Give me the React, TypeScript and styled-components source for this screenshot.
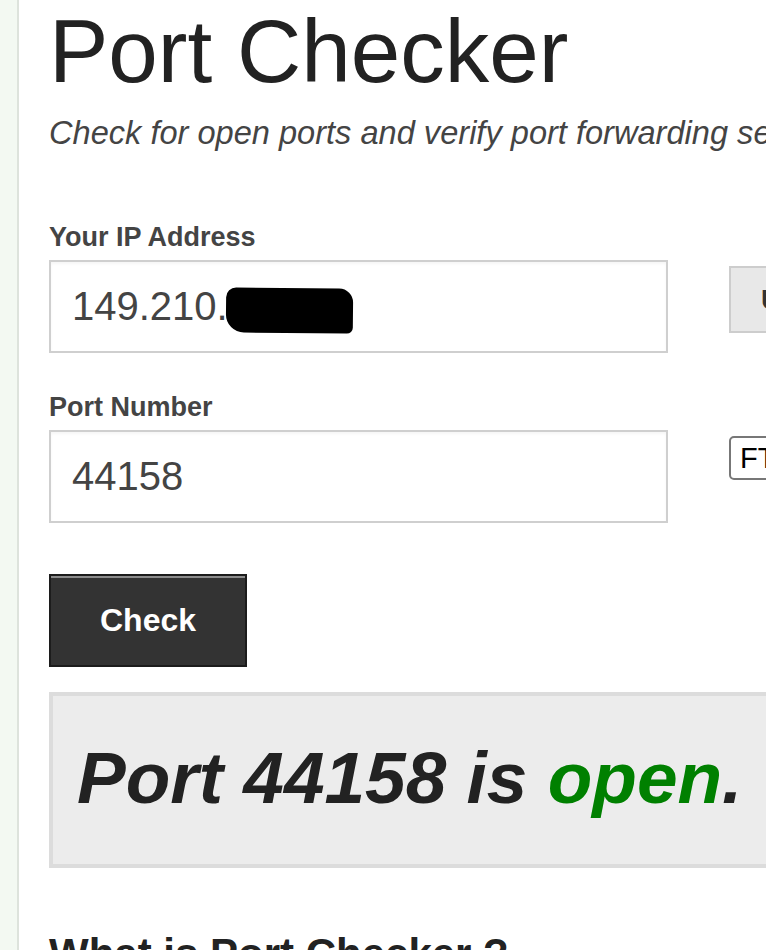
import React from 'react';
import styled, { createGlobalStyle } from 'styled-components';

const GlobalStyle = createGlobalStyle`
  html, body {
    margin: 0;
    padding: 0;
    background: #fff;
    overflow: hidden;
  }
  body {
    font-family: "Liberation Sans", Arial, Helvetica, sans-serif;
    color: #222;
  }
`;

const Page = styled.div`
  display: flex;
  min-height: 950px;
  width: 766px;
  overflow: hidden;
`;

const Sidebar = styled.div`
  flex: 0 0 17px;
  background: #f3f9f2;
  border-right: 2px solid #dde3dc;
`;

const Main = styled.main`
  flex: 1 0 auto;
  padding: 2px 0 0 30px;
  white-space: nowrap;
`;

const Title = styled.h1`
  margin: 0;
  font-size: 89px;
  line-height: 98px;
  font-weight: normal;
  color: #222;
`;

const Subtitle = styled.p`
  margin: 14px 0 0;
  font-size: 32.6px;
  line-height: 38px;
  font-style: italic;
  color: #444;
`;

const Label = styled.label<{ $gap: number }>`
  display: block;
  margin-top: ${(p) => p.$gap}px;
  font-size: 27px;
  line-height: 32px;
  font-weight: bold;
  color: #444;
`;

const FieldRow = styled.div`
  display: flex;
  align-items: flex-start;
  gap: 61px;
  margin-top: 7px;
`;

const Field = styled.div`
  box-sizing: border-box;
  flex: 0 0 619px;
  height: 93px;
  padding: 0 21px;
  display: flex;
  align-items: center;
  border: 2px solid #cfcfcf;
  background: #fff;
  box-shadow: inset 0 2px 3px rgba(0, 0, 0, 0.04);
  font-size: 40px;
  color: #444;
`;

const Redact = styled.span`
  display: inline-block;
  width: 127px;
  height: 45px;
  margin-left: -2px;
  background: #000;
  border-radius: 10px 14px 6px 18px;
  transform: translateY(4px) rotate(0.6deg);
`;

const SideButton = styled.button`
  box-sizing: border-box;
  margin-top: 6px;
  height: 67px;
  padding: 0 30px;
  border: 2px solid #cdcdcd;
  background: #e8e8e8;
  font-family: inherit;
  font-size: 28px;
  font-weight: bold;
  color: #333;
`;

const Select = styled.select`
  box-sizing: border-box;
  margin-top: 6px;
  height: 44px;
  padding: 0 60px 0 9px;
  appearance: none;
  border: 2px solid #777;
  border-radius: 5px;
  background: #fff;
  font-family: inherit;
  font-size: 29px;
  color: #000;
`;

const CheckButton = styled.button`
  box-sizing: border-box;
  display: block;
  margin-top: 51px;
  width: 198px;
  height: 93px;
  border: 2px solid #1c1c1c;
  box-shadow: inset 0 2px 0 #8c8c8c;
  background: #333;
  color: #fff;
  font-family: inherit;
  font-size: 32px;
  font-weight: bold;
`;

const Result = styled.div`
  box-sizing: border-box;
  margin-top: 25px;
  width: 760px;
  height: 176px;
  padding: 37px 24px 0;
  border: 4px solid #dcdcdc;
  background: #ececec;
  font-size: 73px;
  line-height: 89px;
  font-weight: bold;
  font-style: italic;
  color: #222;
`;

const Open = styled.span`
  color: #008000;
`;

const SectionTitle = styled.h2`
  margin: 61px 0 0;
  font-size: 42px;
  line-height: 50px;
  font-weight: bold;
  color: #222;
`;

export default function App() {
  return (
    <>
      <GlobalStyle />
      <Page>
        <Sidebar />
        <Main>
          <Title>Port Checker</Title>
          <Subtitle>Check for open ports and verify port forwarding setup on your router.</Subtitle>

          <Label $gap={69}>Your IP Address</Label>
          <FieldRow>
            <Field>
              149.210.<Redact />
            </Field>
            <SideButton>Use Current IP</SideButton>
          </FieldRow>

          <Label $gap={38}>Port Number</Label>
          <FieldRow>
            <Field>44158</Field>
            <Select defaultValue="21">
              <option value="21">FTP</option>
              <option value="22">SSH</option>
              <option value="80">HTTP</option>
            </Select>
          </FieldRow>

          <CheckButton>Check</CheckButton>

          <Result>
            Port 44158 is <Open>open</Open>.
          </Result>

          <SectionTitle>What is Port Checker ?</SectionTitle>
        </Main>
      </Page>
    </>
  );
}
